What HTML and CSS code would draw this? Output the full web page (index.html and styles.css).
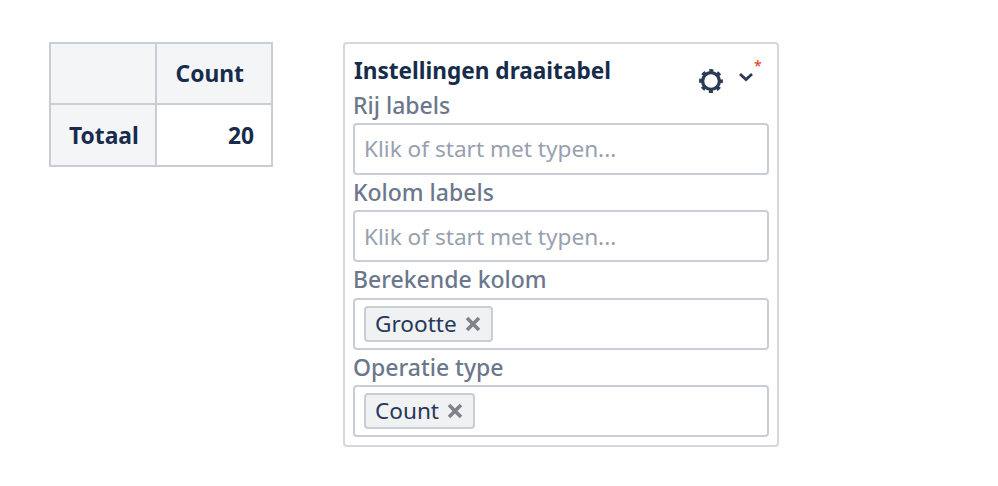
FILE: index.html
```html
<!DOCTYPE html>
<html lang="nl">
<head>
<meta charset="utf-8">
<title>Draaitabel</title>
<link rel="stylesheet" href="styles.css">
</head>
<body>
<main class="page">
  <table class="pivot">
    <tr><th class="corner"></th><th class="head">Count</th></tr>
    <tr><th class="row-head">Totaal</th><td class="value">20</td></tr>
  </table>
  <section class="panel">
    <header class="panel-head">
      <h2 class="title">Instellingen draaitabel</h2>
      <div class="tools">
        <svg class="gear" viewBox="0 0 24 24" width="24" height="24"><circle cx="12" cy="12" r="8.400" fill="none" stroke="#2b3a55" stroke-width="3.300"/><circle cx="12" cy="12" r="10.400" fill="none" stroke="#2b3a55" stroke-width="3" stroke-dasharray="4.080 4.090" stroke-dashoffset="2.040"/></svg>
        <svg class="chevron" viewBox="0 0 14 10" width="14" height="10"><path fill="none" stroke="#2b3a55" stroke-width="2.800" d="M1 2l6 5.500 6-5.500"/></svg>
        <span class="star">*</span>
      </div>
    </header>
    <label class="label">Rij labels</label>
    <div class="field"><span class="placeholder">Klik of start met typen...</span></div>
    <label class="label">Kolom labels</label>
    <div class="field"><span class="placeholder">Klik of start met typen...</span></div>
    <label class="label">Berekende kolom</label>
    <div class="field"><span class="chip">Grootte <svg class="x" viewBox="0 0 16 16" width="16" height="16"><path stroke="#7f8389" stroke-width="3.600" d="M2 2l12 12M14 2L2 14"/></svg></span></div>
    <label class="label">Operatie type</label>
    <div class="field"><span class="chip">Count <svg class="x" viewBox="0 0 16 16" width="16" height="16"><path stroke="#7f8389" stroke-width="3.600" d="M2 2l12 12M14 2L2 14"/></svg></span></div>
  </section>
</main>
</body>
</html>
```
FILE: styles.css
```css
html, body { margin: 0; background: #fff; }
body { font-family: "Noto Sans", "Open Sans", sans-serif; color: #172b4d; }
.page { display: flex; align-items: flex-start; gap: 70px; padding: 42px 0 0 49px; }
.pivot { border-collapse: collapse; width: 224px; table-layout: fixed; font-size: 22.800px; }
.pivot th, .pivot td { border: 2px solid #c8cdd6; height: 60px; padding: 0 17px 0 18px; box-sizing: content-box; }
.pivot .corner, .pivot .head { height: 59px; }
.pivot th { background: #f4f5f7; font-weight: 700; }
.corner { width: 69px; }
.row-head { text-align: left; }
.pivot .head { text-align: right; padding-right: 27px; }
.value { text-align: right; background: #fff; font-weight: 700; }
.panel { width: 416px; padding: 8px; border: 2px solid #d5d7dc; border-radius: 4px; display: flex; flex-direction: column; }
.panel-head { display: flex; justify-content: space-between; height: 35.700px; }
.title { margin: 0 0 0 1px; font-size: 22.600px; line-height: 38px; font-weight: 700; }
.tools { position: relative; width: 72px; }
.gear { position: absolute; left: 2px; top: 17px; }
.chevron { position: absolute; left: 42px; top: 20px; }
.star { position: absolute; left: 57px; top: 6px; color: #de350b; font-size: 14px; line-height: 16px; }
.label { font-size: 23px; line-height: 35.300px; height: 35.300px; color: #6b778c; font-weight: 500; }
.field { height: 48px; border: 2px solid #c8cdd6; border-radius: 4px; padding: 0 9px; display: flex; align-items: center; font-size: 22.600px; flex: none; }
.placeholder { color: #97a0af; }
.chip { display: inline-flex; align-items: center; gap: 8px; height: 32px; padding: 0 10px 0 9px; border: 2px solid #c8cdd6; border-radius: 4px; background: #f0f1f3; color: #253858; }
.x { flex: none; }
```
